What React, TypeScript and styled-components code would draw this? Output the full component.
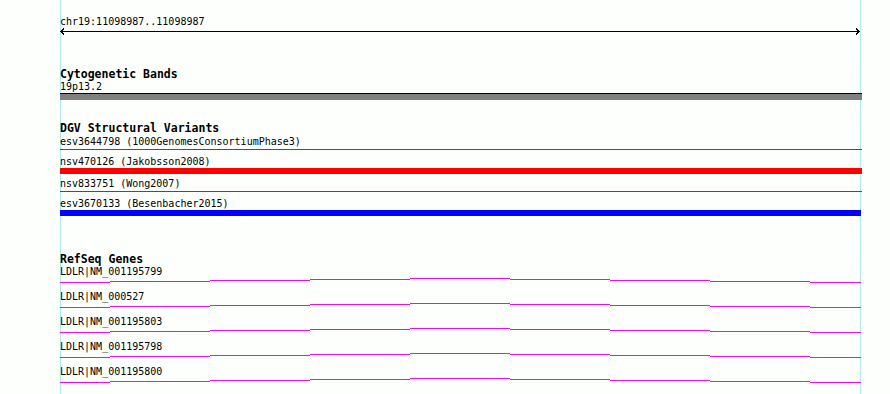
import styled, { createGlobalStyle } from 'styled-components';

const GlobalStyle = createGlobalStyle`
  html, body {
    margin: 0;
    padding: 0;
    background: #fdfffd;
  }
  body {
    font-family: 'DejaVu Sans Mono', 'Liberation Mono', monospace;
    color: #000;
  }
`;

const guide = '#aeeaf0';

const Page = styled.div`
  width: 890px;
  height: 394px;
  overflow: hidden;
  background: #fdfffd;
`;

const Panel = styled.div`
  display: flex;
  flex-direction: column;
  width: 802px;
  height: 394px;
  margin-left: 60px;
  padding-top: 16px;
  box-sizing: border-box;
  background: linear-gradient(
    to right,
    ${guide} 0 1px,
    transparent 1px 800px,
    ${guide} 800px 801px,
    transparent 801px
  );
`;

const Label = styled.div`
  font-size: 10px;
  line-height: 11px;
  height: 11px;
  white-space: nowrap;
`;

const TrackTitle = styled.div<{ $gap: number }>`
  margin-top: ${(p) => p.$gap}px;
  font-size: 11.5px;
  font-weight: bold;
  line-height: 12px;
  height: 12px;
  white-space: nowrap;
`;

const Ruler = styled.svg`
  display: block;
  margin-top: 1px;
  width: 802px;
  height: 7px;
`;

const Band = styled.div`
  margin-top: 1px;
  height: 6px;
  border-top: 1px solid #000;
  background: #808080;
`;

const Feature = styled.div`
  display: flex;
  flex-direction: column;
`;

const FirstFeatures = styled.div`
  display: flex;
  flex-direction: column;
  margin-top: 2px;
`;

const Glyph = styled.div<{ $thick: boolean; $color: string; $inset?: boolean }>`
  height: ${(p) => (p.$thick ? 6 : 1)}px;
  margin-top: ${(p) => (p.$thick ? 1 : 2)}px;
  margin-bottom: ${(p) => (p.$thick ? 4 : 6)}px;
  margin-right: ${(p) => (p.$inset ? 1 : 0)}px;
  background: ${(p) => p.$color};
`;

const Genes = styled.div`
  display: flex;
  flex-direction: column;
  margin-top: 1px;
`;

const GeneRow = styled.div`
  display: flex;
  flex-direction: column;
  height: 25px;
`;

const Transcript = styled.svg`
  display: block;
  margin-top: 1px;
  width: 802px;
  height: 5px;
`;

const variants = [
  { name: 'esv3644798 (1000GenomesConsortiumPhase3)', thick: false, color: '#d01818' },
  { name: 'nsv470126 (Jakobsson2008)', thick: true, color: '#ff0000' },
  { name: 'nsv833751 (Wong2007)', thick: false, color: '#d01818' },
  { name: 'esv3670133 (Besenbacher2015)', thick: true, color: '#0000ff', inset: true },
];

const transcripts = [
  'LDLR|NM_001195799',
  'LDLR|NM_000527',
  'LDLR|NM_001195803',
  'LDLR|NM_001195798',
  'LDLR|NM_001195800',
];

// exon steps of the gene line, a shallow arc across the view
const steps = [
  [0, 50, 4.5],
  [50, 150, 3.5],
  [150, 250, 2.5],
  [250, 350, 1.5],
  [350, 450, 0.5],
  [450, 550, 1.5],
  [550, 650, 2.5],
  [650, 750, 3.5],
  [750, 801, 4.5],
];
const arcPath = steps.map(([a, b, y]) => `M${a} ${y}H${b}`).join('');

export default function App() {
  return (
    <Page>
      <GlobalStyle />
      <Panel>
        <Label>chr19:11098987..11098987</Label>
        <Ruler viewBox="0 0 802 7" shapeRendering="crispEdges">
          <path d="M0 3.5H800" stroke="#000" strokeWidth="1" fill="none" />
          <path d="M4 0.5L1 3.5L4 6.5" stroke="#000" strokeWidth="1" fill="none" />
          <path d="M796 0.5L799 3.5L796 6.5" stroke="#000" strokeWidth="1" fill="none" />
        </Ruler>

        <TrackTitle $gap={33}>Cytogenetic Bands</TrackTitle>
        <Label style={{ marginTop: 1 }}>19p13.2</Label>
        <Band />

        <TrackTitle $gap={22}>DGV Structural Variants</TrackTitle>
        <FirstFeatures>
          {variants.map((v) => (
            <Feature key={v.name}>
              <Label>{v.name}</Label>
              <Glyph $thick={v.thick} $color={v.color} $inset={v.inset} />
            </Feature>
          ))}
        </FirstFeatures>

        <TrackTitle $gap={33}>RefSeq Genes</TrackTitle>
        <Genes>
          {transcripts.map((t) => (
            <GeneRow key={t}>
              <Label>{t}</Label>
              <Transcript viewBox="0 0 802 5" shapeRendering="crispEdges">
                <path d={arcPath} stroke="#ff00ff" strokeWidth="1" fill="none" />
              </Transcript>
            </GeneRow>
          ))}
        </Genes>
      </Panel>
    </Page>
  );
}
